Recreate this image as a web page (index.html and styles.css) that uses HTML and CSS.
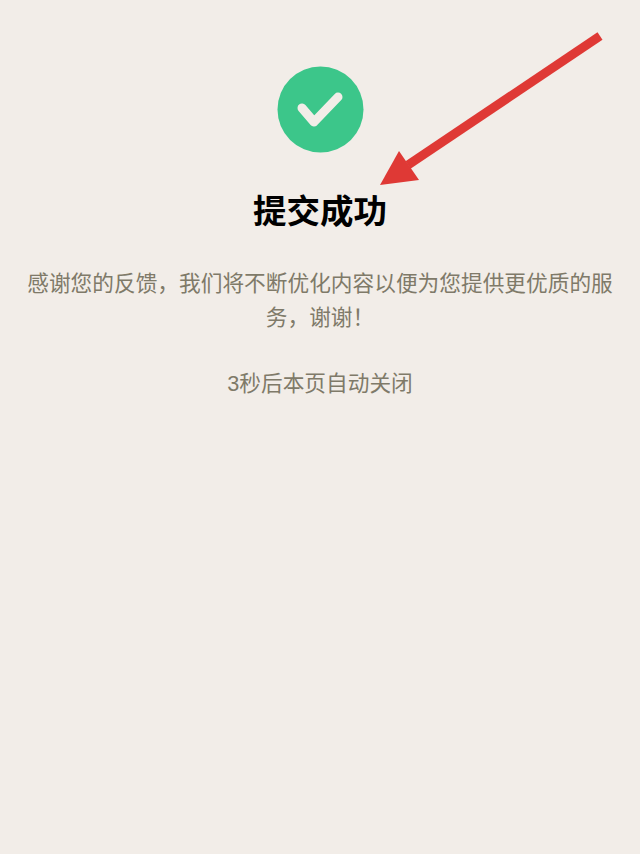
FILE: index.html
```html
<!DOCTYPE html>
<html lang="zh-CN">
<head>
  <meta charset="UTF-8">
  <title>提交成功</title>
  <link rel="stylesheet" href="styles.css">
</head>
<body>
  <div class="result">
    <svg class="result-icon" width="87" height="87" viewBox="0 0 87 87">
      <circle cx="43.5" cy="43.5" r="43" fill="#3cc68a"/>
      <path d="M25 42 L37 56 L61 31" fill="none" stroke="#f2ede8" stroke-width="9" stroke-linecap="round" stroke-linejoin="round"/>
    </svg>
    <h1 class="result-title">提交成功</h1>
    <p class="result-text">感谢您的反馈，我们将不断优化内容以便为您提供更优质的服务，谢谢！</p>
    <p class="result-close">3秒后本页自动关闭</p>
  </div>

  <!-- red arrow drawn over the page -->
  <svg class="arrow" width="640" height="200" viewBox="0 0 640 200">
    <path d="M600 36 L408 165" fill="none" stroke="#df3935" stroke-width="9"/>
    <polygon points="380,185 399,151 419,180" fill="#df3935"/>
  </svg>
</body>
</html>
```

FILE: styles.css
```css
body {
  margin: 0;
  min-height: 854px;
  background: #f2ede8;
  font-family: "Liberation Sans", "Noto Sans CJK SC", sans-serif;
  position: relative;
  overflow: hidden;
}
.result {
  display: flex;
  flex-direction: column;
  align-items: center;
  padding: 66px 26px 0;
}
.result-icon {
  display: block;
}
.result-title {
  margin: 37px 0 0;
  font-size: 33.5px;
  line-height: 44px;
  font-weight: bold;
  color: #000;
}
.result-text {
  margin: 33px 0 0;
  font-size: 21.7px;
  line-height: 34px;
  color: #7f7a69;
  text-align: center;
}
.result-close {
  margin: 32px 0 0;
  font-size: 21.7px;
  line-height: 34px;
  color: #7f7a69;
}
.arrow {
  position: absolute;
  left: 0;
  top: 0;
}
```
